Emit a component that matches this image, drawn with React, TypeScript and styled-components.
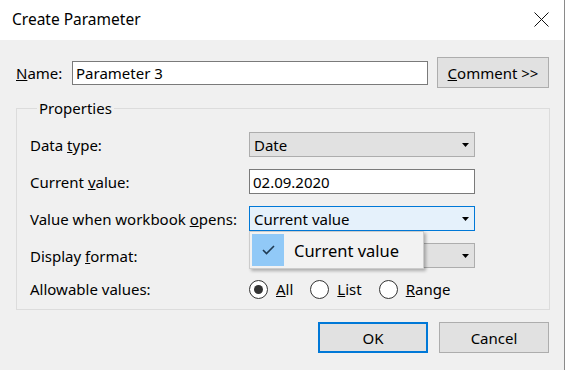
import React from "react";
import styled, { createGlobalStyle } from "styled-components";

const Global = createGlobalStyle`
  html, body { margin: 0; padding: 0; background: #ffffff; }
  body { font-family: "Noto Sans", "Open Sans", sans-serif; font-size: 15px; color: #000; }
  * { box-sizing: border-box; }
`;

const Dialog = styled.div`
  width: 565px;
  height: 370px;
  border-right: 1px solid #8a8a8a;
  display: flex;
  flex-direction: column;
`;

const TitleBar = styled.div`
  height: 40px;
  background: #ffffff;
  display: flex;
  align-items: center;
  justify-content: space-between;
  padding: 0 15px 2px 12px;
  font-size: 15.5px;
  color: #000;
`;

const Body = styled.div`
  flex: 1;
  background: #f0f0f0;
  padding: 17px 14px 0 16px;
`;

const NameRow = styled.div`
  display: flex;
  align-items: center;
  height: 31px;
`;

const NameLabel = styled.label`
  width: 56px;
  line-height: 20px;
`;

const TextInput = styled.div<{ $w: number }>`
  width: ${(p) => p.$w}px;
  height: 24px;
  background: #ffffff;
  border: 1px solid #7a7a7a;
  padding: 0 3px;
  display: flex;
  align-items: center;
  line-height: 20px;
`;

const Button = styled.div<{ $w: number; $default?: boolean }>`
  width: ${(p) => p.$w}px;
  height: 31px;
  background: #e1e1e1;
  border: ${(p) => (p.$default ? "2px solid #0078d7" : "1px solid #adadad")};
  display: flex;
  align-items: center;
  justify-content: center;
  line-height: 20px;
`;

const CommentButton = styled(Button)`
  margin-left: 9px;
`;

const Group = styled.fieldset`
  margin: 10px 0 0 0;
  width: 534px;
  border: 1px solid #dcdcdc;
  padding: 14px 0 11px 13px;
`;

const Legend = styled.legend`
  margin-left: 7px;
  padding: 0 2px;
  line-height: 20px;
`;

const Grid = styled.div`
  display: grid;
  grid-template-columns: 219px 226px;
  grid-template-rows: 25px 25px 25px 25px 18px;
  row-gap: 12px;
  align-items: center;
`;

const RowLabel = styled.div`
  line-height: 20px;
`;

const ComboWrap = styled.div`
  position: relative;
  height: 25px;
`;

const Combo = styled.div<{ $focus?: boolean }>`
  height: 25px;
  background: ${(p) => (p.$focus ? "#e5f1fb" : "#e1e1e1")};
  border: 1px solid ${(p) => (p.$focus ? "#0078d7" : "#adadad")};
  display: flex;
  align-items: center;
  justify-content: space-between;
  padding: 0 5px 0 4px;
  line-height: 20px;
`;

const DateInput = styled(TextInput)`
  height: 25px;
`;

const Popup = styled.div`
  position: absolute;
  top: 25px;
  left: 0;
  width: 175px;
  height: 38px;
  background: #f2f2f2;
  border: 1px solid #cccccc;
  box-shadow: 2px 2px 3px rgba(0, 0, 0, 0.28);
  padding: 2px;
  z-index: 5;
`;

const PopupItem = styled.div`
  display: flex;
  align-items: center;
  height: 32px;
  font-size: 16.5px;
`;

const CheckArea = styled.div`
  width: 32px;
  height: 32px;
  background: #91c9f7;
  display: flex;
  align-items: center;
  justify-content: center;
  margin-right: 10px;
`;

const Radios = styled.div`
  display: flex;
  align-items: center;
  line-height: 20px;
`;

const RadioOption = styled.div`
  display: flex;
  align-items: center;
  margin-right: 17px;
`;

const RadioCircle = styled.div<{ $checked?: boolean }>`
  width: 19px;
  height: 19px;
  border-radius: 50%;
  border: 1px solid #333333;
  background: #ffffff;
  margin-right: 8px;
  display: flex;
  align-items: center;
  justify-content: center;
  &::after {
    content: "";
    display: ${(p) => (p.$checked ? "block" : "none")};
    width: 9px;
    height: 9px;
    border-radius: 50%;
    background: #333333;
  }
`;

const ButtonRow = styled.div`
  display: flex;
  justify-content: flex-end;
  gap: 11px;
  margin: 12px 1px 0 0;
`;

const Arrow = () => (
  <svg width="7" height="4" viewBox="0 0 7 4">
    <path d="M0 0 H7 L3.5 4 Z" fill="#000" />
  </svg>
);

const CloseIcon = () => (
  <svg width="15" height="15" viewBox="0 0 15 15">
    <path d="M0.5 0.5 L14.5 14.5 M14.5 0.5 L0.5 14.5" stroke="#111" strokeWidth="1" fill="none" />
  </svg>
);

const Check = () => (
  <svg width="13" height="10" viewBox="0 0 13 10">
    <path d="M1 5 L4.5 8.5 L12 1" stroke="#1f3a52" strokeWidth="1.6" fill="none" />
  </svg>
);

export default function App() {
  return (
    <>
      <Global />
      <Dialog>
        <TitleBar>
          <span>Create Parameter</span>
          <CloseIcon />
        </TitleBar>
        <Body>
          <NameRow>
            <NameLabel>
              <u>N</u>ame:
            </NameLabel>
            <TextInput $w={356}>Parameter 3</TextInput>
            <CommentButton $w={112}>
              <span>
                <u>C</u>omment &gt;&gt;
              </span>
            </CommentButton>
          </NameRow>
          <Group>
            <Legend>Properties</Legend>
            <Grid>
              <RowLabel>
                Data <u>t</u>ype:
              </RowLabel>
              <Combo>
                <span>Date</span>
                <Arrow />
              </Combo>
              <RowLabel>
                Current <u>v</u>alue:
              </RowLabel>
              <DateInput $w={226}>02.09.2020</DateInput>
              <RowLabel>
                Value when workbook <u>o</u>pens:
              </RowLabel>
              <ComboWrap>
                <Combo $focus>
                  <span>Current value</span>
                  <Arrow />
                </Combo>
                <Popup>
                  <PopupItem>
                    <CheckArea>
                      <Check />
                    </CheckArea>
                    <span>Current value</span>
                  </PopupItem>
                </Popup>
              </ComboWrap>
              <RowLabel>
                Display <u>f</u>ormat:
              </RowLabel>
              <Combo>
                <span></span>
                <Arrow />
              </Combo>
              <RowLabel>Allowable values:</RowLabel>
              <Radios>
                <RadioOption>
                  <RadioCircle $checked />
                  <span>
                    <u>A</u>ll
                  </span>
                </RadioOption>
                <RadioOption>
                  <RadioCircle />
                  <span>
                    <u>L</u>ist
                  </span>
                </RadioOption>
                <RadioOption>
                  <RadioCircle />
                  <span>
                    <u>R</u>ange
                  </span>
                </RadioOption>
              </Radios>
            </Grid>
          </Group>
          <ButtonRow>
            <Button $w={110} $default>
              OK
            </Button>
            <Button $w={110}>Cancel</Button>
          </ButtonRow>
        </Body>
      </Dialog>
    </>
  );
}
